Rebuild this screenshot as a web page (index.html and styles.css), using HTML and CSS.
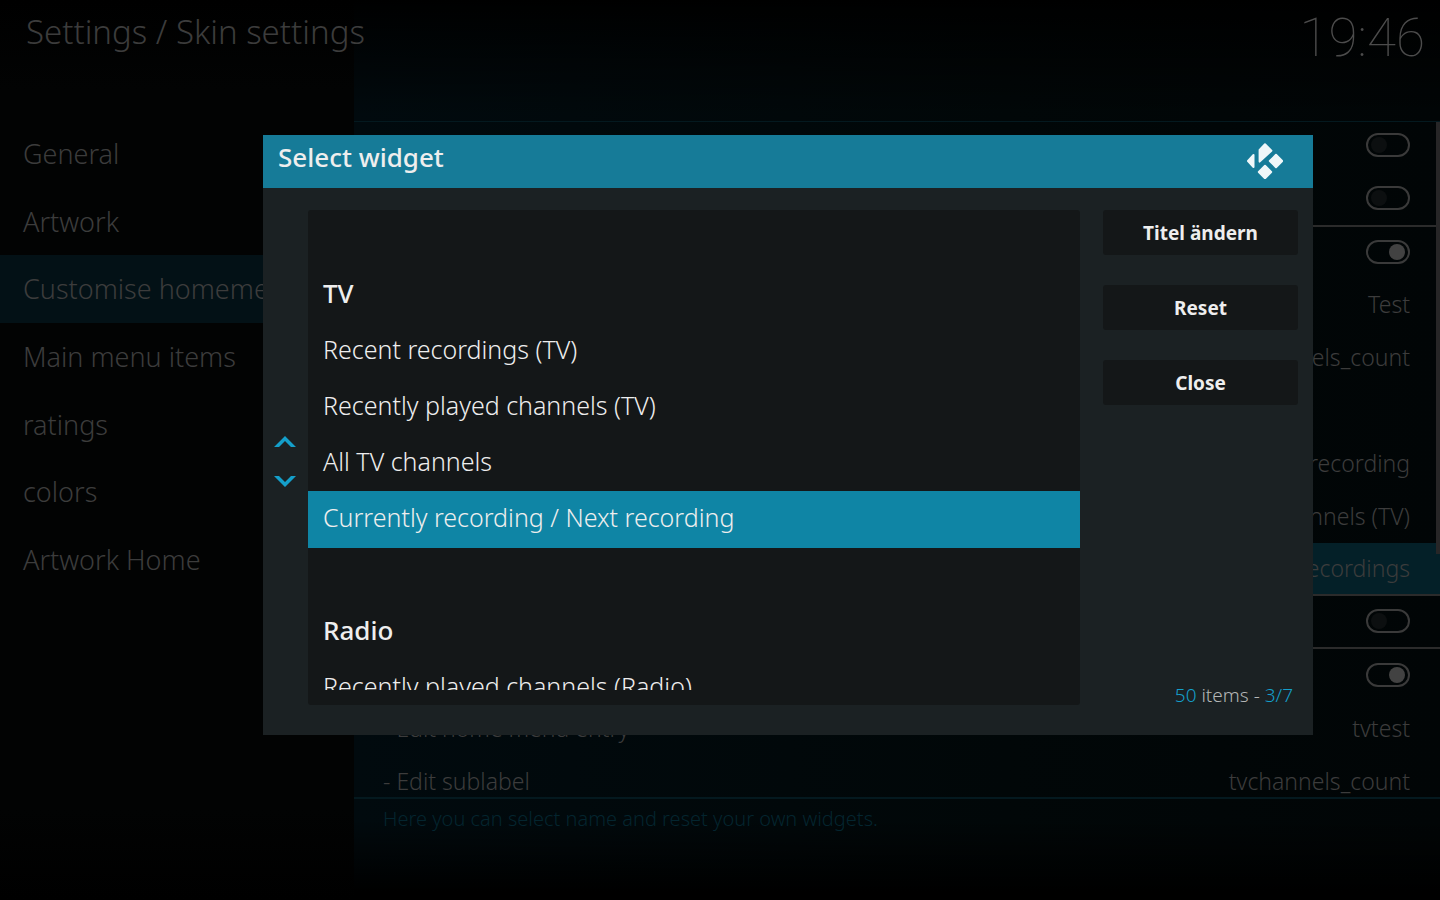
FILE: index.html
```
<!DOCTYPE html>
<html lang="en">
  <head>
    <meta charset="UTF-8" />
    <meta name="viewport" content="width=device-width, initial-scale=1.0" />
    <title>Settings / Skin settings</title>
    <link rel="stylesheet" href="styles.css">
  </head>
  <body>
    <div class="screen">
      <div class="side">
        <h1 class="title">Settings / Skin settings</h1>
        <nav class="menu">
          <a href="#">General</a>
          <a href="#">Artwork</a>
          <a href="#" class="active">Customise homemenu</a>
          <a href="#">Main menu items</a>
          <a href="#">ratings</a>
          <a href="#">colors</a>
          <a href="#">Artwork Home</a>
        </nav>
      </div>
      <div class="main">
        <div class="top"><time class="clock">19:46</time></div>
        <div class="options">
          <div class="rows">
            <label class="row"><input type="checkbox" class="toggle" aria-label="Favourites"></label>
            <label class="row"><input type="checkbox" class="toggle" aria-label="Weather"></label>
            <label class="row line"><input type="checkbox" class="toggle" aria-label="Custom entry 1" checked></label>
            <button class="row"><span>Test</span></button>
            <button class="row"><span>tvchannels_count</span></button>
            <button class="row" aria-label="Widgets"></button>
            <button class="row"><span>Next recording</span></button>
            <button class="row"><span>channels (TV)</span></button>
            <button class="row current"><span>Recent recordings</span></button>
            <label class="row end"><input type="checkbox" class="toggle" aria-label="Custom entry 2"></label>
            <label class="row"><input type="checkbox" class="toggle" aria-label="Custom entry 3" checked></label>
            <button class="row"><span class="name">- Edit home menu entry</span><span>tvtest</span></button>
            <button class="row"><span class="name">- Edit sublabel</span><span>tvchannels_count</span></button>
          </div>
          <div class="scrollbar"></div>
        </div>
        <p class="hint">Here you can select name and reset your own widgets.</p>
      </div>
    </div>

    <div class="overlay">
      <div class="dialog" role="dialog" aria-labelledby="dialog-title">
        <div class="dialog-head">
          <h2 id="dialog-title">Select widget</h2>
          <svg class="logo" viewBox="0 0 36 36" width="36" height="36">
            <path d="M1 18 6.5 12V24z" />
            <path d="M12.6 7 18 1.2 24.4 7.8 12.6 18.6z" />
            <path d="M29 11.8 35.2 18 29 24.2 22.8 18z" />
            <path d="M18 22.8 24.2 29 18 35.2 11.8 29z" />
          </svg>
        </div>
        <div class="dialog-body">
          <div class="arrows">
            <button aria-label="Up"><svg viewBox="0 0 22 11" width="22" height="11"><path d="M0 11 11 0 22 11H17L11 5 5 11z" /></svg></button>
            <button aria-label="Down"><svg viewBox="0 0 22 11" width="22" height="11"><path d="M0 0 11 11 22 0H17L11 6 5 0z" /></svg></button>
          </div>
          <div class="panel">
            <ul class="list">
              <li></li>
              <li class="group">TV</li>
              <li>Recent recordings (TV)</li>
              <li>Recently played channels (TV)</li>
              <li>All TV channels</li>
              <li class="selected">Currently recording / Next recording</li>
              <li></li>
              <li class="group">Radio</li>
              <li>Recently played channels (Radio)</li>
            </ul>
          </div>
          <div class="actions">
            <button class="btn">Titel ändern</button>
            <button class="btn">Reset</button>
            <button class="btn">Close</button>
            <p class="count"><b>50</b> items - <b>3/7</b></p>
          </div>
        </div>
      </div>
    </div>
  </body>
</html>
```
FILE: styles.css
```
* {
  margin: 0;
  padding: 0;
  box-sizing: border-box;
}
body {
  font-family: "Noto Sans", sans-serif;
  font-weight: 300;
  color: #3c3c3c;
  background-color: #000;
}
ul {
  list-style: none;
}
a {
  color: inherit;
  text-decoration: none;
}
button {
  border: 0;
  background: none;
  font: inherit;
  color: inherit;
  cursor: pointer;
}
svg {
  display: block;
}

/* settings page */
.screen {
  display: flex;
  min-height: 100vh;
}
.side {
  position: relative; /* the title runs out over the right part */
  z-index: 1;
  width: 354px;
  background: linear-gradient(#000, #020303 10%, #020303 90%, #000);
}
.title {
  height: 120px;
  padding: 7px 0 0 26px;
  font-size: 33px;
  line-height: 50px;
  font-weight: 300;
  white-space: nowrap;
}
.menu {
  display: grid;
  grid-auto-rows: 1fr;
  height: 473px;
  font-size: 27px;
}
.menu a {
  display: flex;
  align-items: center;
  padding-left: 23px;
  white-space: nowrap;
}
.menu .active {
  background-color: #031116;
}
.main {
  flex: 1;
  background:
    linear-gradient(#000, transparent 13%, transparent 91%, #000 99%),
    linear-gradient(to right, #010a0e, #010708 60%, #010506);
}
.top {
  height: 122px;
  padding: 8px 15px 0 0;
  border-bottom: 1px solid #04191f;
  text-align: right;
}
.clock {
  font: 100 53px/60px Roboto, sans-serif;
  color: #4c4c4c;
}

/* option rows */
.options {
  position: relative;
  height: 677px;
  border-bottom: 2px solid #04191f;
  overflow: hidden;
}
.rows {
  margin-top: -3px;
}
.row {
  display: flex;
  justify-content: flex-end;
  align-items: center;
  width: 100%;
  height: 53px;
  padding: 0 30px 2px 29px;
  font-size: 23px;
}
.row .name {
  margin-right: auto;
}
.row.line {
  border-top: 2px solid #2b2b2b;
}
.row.current {
  background-color: #042028;
  border-bottom: 2px solid #2b2b2b;
}
.row.end {
  border-bottom: 2px solid #2b2b2b;
}
.toggle {
  appearance: none;
  display: flex;
  align-items: center;
  width: 44px;
  height: 24px;
  padding: 0 3px;
  border: 2px solid #3a3a3a;
  border-radius: 12px;
}
.toggle::before {
  content: "";
  width: 16px;
  height: 16px;
  border-radius: 50%;
  background-color: #0c0f10;
}
.toggle:checked {
  justify-content: flex-end;
}
.toggle:checked::before {
  background-color: #424242;
}
.scrollbar {
  position: absolute;
  top: 0;
  right: 0;
  width: 4px;
  height: 432px;
  background-color: #272627;
}
.hint {
  padding: 6px 29px;
  font-size: 20px;
  line-height: 28px;
  color: #04252f;
}

/* dialog */
.overlay {
  position: fixed;
  inset: 0;
  z-index: 2;
  padding: 135px 127px 0 263px;
}
.dialog {
  background-color: #1b2123;
  color: #eee;
}
.dialog-head {
  display: flex;
  justify-content: space-between;
  height: 53px;
  padding: 8px 30px 0 15px;
  background-color: #167b98;
}
.dialog-head h2 {
  font-size: 26px;
  line-height: 28px;
  font-weight: 500;
}
.logo {
  fill: #eff7f9;
  stroke: #eff7f9;
  stroke-width: 2;
  stroke-linejoin: round;
}
.dialog-body {
  display: flex;
  padding: 22px 15px 30px 0;
}
.arrows {
  display: flex;
  flex-direction: column;
  justify-content: center;
  align-items: center;
  gap: 29px;
  width: 45px;
  padding: 8px 1px 0 0;
}
.arrows path {
  fill: #149fca;
}
.panel {
  flex: 1;
  padding: 1px 0 15px;
  border-radius: 3px;
  background-color: #141718;
}
.list {
  height: 479px;
  overflow: hidden;
  font-size: 25px;
}
.list li {
  height: 56px;
  padding-left: 15px;
  line-height: 52px;
}
.list .group {
  font-size: 26px;
  font-weight: 500;
}
.list .selected {
  height: 57px;
  background-color: #0f85a5;
}
.actions {
  display: flex;
  flex-direction: column;
  gap: 30px;
  width: 195px;
  margin-left: 23px;
}
.btn {
  height: 45px;
  border-radius: 3px;
  background-color: #141718;
  font-size: 19px;
  font-weight: 700;
}
.count {
  margin-top: auto;
  padding-right: 5px;
  font-size: 19px;
  line-height: 19px;
  text-align: right;
  color: #b4b6b6;
}
.count b {
  font-weight: 300;
  color: #149fca;
}
```
